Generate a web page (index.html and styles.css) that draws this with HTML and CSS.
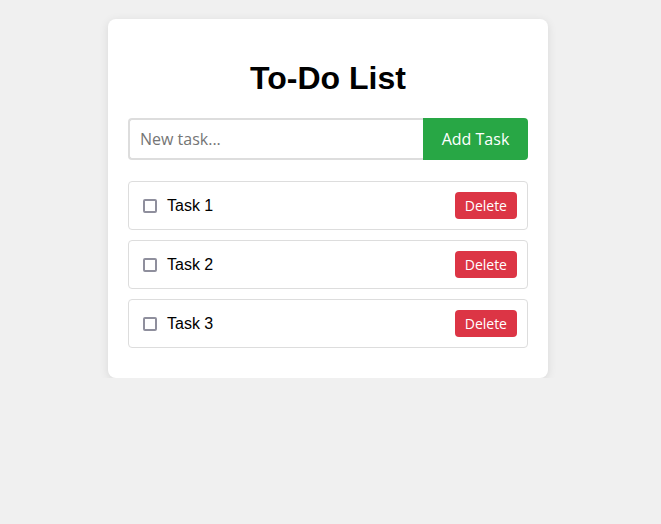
FILE: index.html
```html
<!DOCTYPE html>
<html>
<head>
<meta charset="utf-8">
<link rel="stylesheet" href="styles.css">
</head>
<body>
<div class="container">
  <h1 class="title">To-Do List</h1>
  <div class="input-row">
    <input class="task-input" type="text" placeholder="New task...">
    <button class="add-btn">Add Task</button>
  </div>
  <ul class="task-list">
    <li class="task"><label class="task-label"><input type="checkbox" class="check"><span class="task-text">Task 1</span></label><button class="del-btn">Delete</button></li>
    <li class="task"><label class="task-label"><input type="checkbox" class="check"><span class="task-text">Task 2</span></label><button class="del-btn">Delete</button></li>
    <li class="task"><label class="task-label"><input type="checkbox" class="check"><span class="task-text">Task 3</span></label><button class="del-btn">Delete</button></li>
  </ul>
</div>
</body>
</html>
```
FILE: styles.css
```css
html, body {
  margin: 0;
  padding: 0;
  background: #f0f0f0;
  font-family: "Liberation Sans", Arial, sans-serif;
}
body {
  padding: 19px 5px 0 0;
}
.container {
  width: 400px;
  margin: 0 auto;
  background: #fff;
  padding: 20px;
  border-radius: 8px;
  box-shadow: 0 2px 10px rgba(0,0,0,0.1);
}
.title {
  text-align: center;
  font-size: 32px;
  margin: 21px 0 21px;
  color: #000;
  line-height: 37px;
}
.input-row {
  display: flex;
  margin-bottom: 21px;
}
.task-input {
  flex: 1;
  min-width: 0;
  padding: 10px;
  border: 2px solid #ddd;
  border-right: none;
  border-radius: 4px 0 0 4px;
  font-family: "Open Sans", "Noto Sans", sans-serif;
  font-size: 16px;
  line-height: 18px;
  height: 42px;
  box-sizing: border-box;
  color: #333;
  outline: none;
}
.task-input::placeholder {
  color: #757575;
}
.add-btn {
  width: 105px;
  height: 42px;
  background: #28a745;
  color: #fff;
  border: none;
  border-radius: 0 4px 4px 0;
  font-family: "Open Sans", "Noto Sans", sans-serif;
  font-size: 16px;
  padding: 0;
}
.task-list {
  list-style: none;
  margin: 0;
  padding: 0;
}
.task {
  display: flex;
  align-items: center;
  justify-content: space-between;
  border: 1px solid #ddd;
  border-radius: 4px;
  padding: 0 10px;
  height: 49px;
  box-sizing: border-box;
  margin-bottom: 10px;
}
.task-label {
  display: flex;
  align-items: center;
  font-size: 16px;
  color: #000;
}
.check {
  -webkit-appearance: none;
  appearance: none;
  width: 14px;
  height: 14px;
  box-sizing: border-box;
  border: 2px solid #8f8f9d;
  border-radius: 2px;
  background: #fff;
  margin: 0 0 0 4px;
}
.task-text {
  margin-left: 10px;
}
.del-btn {
  background: #dc3545;
  color: #fff;
  border: none;
  border-radius: 4px;
  font-family: "Open Sans", "Noto Sans", sans-serif;
  font-size: 14px;
  height: 27px;
  padding: 0 10px;
}
```
